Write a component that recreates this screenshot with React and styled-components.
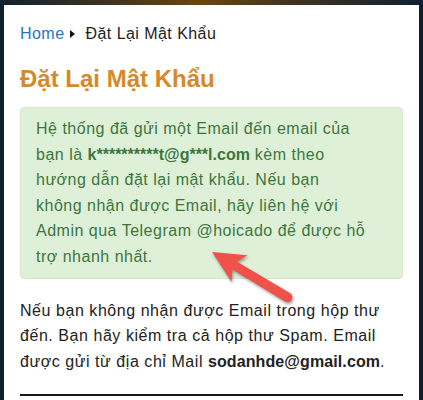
import React from "react";
import styled, { createGlobalStyle } from "styled-components";

const GlobalStyle = createGlobalStyle`
  html, body {
    margin: 0;
    padding: 0;
    background-color: #0f1f2b;
  }
  body {
    font-family: "Liberation Sans", Arial, sans-serif;
  }
  * {
    box-sizing: border-box;
  }
`;

const StyledFrame = styled.div`
  display: flex;
  flex-direction: column;
  min-height: 400px;
  background-color: #0f1f2b;
`;

const StyledTopBar = styled.div`
  height: 5px;
  background: linear-gradient(
    to right,
    #0f2230 0%,
    #3f3320 25%,
    #6b4412 47%,
    #3f3320 70%,
    #0f2230 100%
  );
`;

const StyledPanel = styled.main`
  position: relative;
  flex: 1;
  margin: 0 4px;
  padding: 15px 16px 0;
  background-color: #fff;
`;

const StyledBreadcrumb = styled.nav`
  display: flex;
  align-items: center;
  font-size: 16px;
  line-height: 27px;
  letter-spacing: 0.45px;
  color: #222;
`;

const StyledHomeLink = styled.a`
  color: #1a76c6;
  text-decoration: none;
`;

const StyledCaret = styled.span`
  width: 0;
  height: 0;
  margin: 0 10px 0 6px;
  border-top: 4px solid transparent;
  border-bottom: 4px solid transparent;
  border-left: 5px solid #111;
`;

const StyledTitle = styled.h1`
  margin: 17px 0 14px;
  font-size: 24px;
  line-height: 29px;
  font-weight: 700;
  color: #d5892a;
`;

const StyledAlert = styled.div`
  padding: 8px 35px 8px 15px;
  border: 1px solid #d6e9c6;
  border-radius: 4px;
  background-color: #dff0d8;
  color: #3c763d;
  font-size: 16px;
  line-height: 25.6px;
  letter-spacing: 0.5px;

  strong {
    letter-spacing: 0;
  }
`;

const StyledNote = styled.p`
  margin: 19px 0 20px;
  font-size: 16px;
  line-height: 25.5px;
  letter-spacing: 0.55px;
  color: #222;

  strong {
    letter-spacing: 0.1px;
  }
`;

const StyledRule = styled.hr`
  margin: 0;
  border: none;
  height: 2px;
  background-color: #1a1a1a;
`;

const StyledArrow = styled.svg`
  position: absolute;
  left: 196px;
  top: 237px;
  overflow: visible;
  filter: drop-shadow(1px 2px 1.5px rgba(0, 0, 0, 0.35));
`;

function PointerArrow() {
  return (
    <StyledArrow width="100" height="70" viewBox="0 0 100 70">
      <g transform="translate(12 10) rotate(31)">
        <path
          d="M0 0 L32 -15.5 L26.5 -4.5 L88 -5 A5 5 0 0 1 88 5 L26.5 4.5 L32 15.5 Z"
          fill="#f0524b"
        />
      </g>
    </StyledArrow>
  );
}

export default function App() {
  return (
    <StyledFrame>
      <GlobalStyle />
      <StyledTopBar />
      <StyledPanel>
        <StyledBreadcrumb>
          <StyledHomeLink href="#">Home</StyledHomeLink>
          <StyledCaret />
          <span>Đặt Lại Mật Khẩu</span>
        </StyledBreadcrumb>
        <StyledTitle>Đặt Lại Mật Khẩu</StyledTitle>
        <StyledAlert>
          Hệ thống đã gửi một Email đến email của bạn là{" "}
          <strong>k**********t@g***l.com</strong> kèm theo hướng dẫn đặt lại
          mật khẩu. Nếu bạn không nhận được Email, hãy liên hệ với Admin qua
          Telegram @hoicado để được hỗ trợ nhanh nhất.
        </StyledAlert>
        <StyledNote>
          Nếu bạn không nhận được Email trong hộp thư đến. Bạn hãy kiểm tra cả
          hộp thư Spam. Email được gửi từ địa chỉ Mail{" "}
          <strong>sodanhde@gmail.com</strong>.
        </StyledNote>
        <StyledRule />
        <PointerArrow />
      </StyledPanel>
    </StyledFrame>
  );
}
